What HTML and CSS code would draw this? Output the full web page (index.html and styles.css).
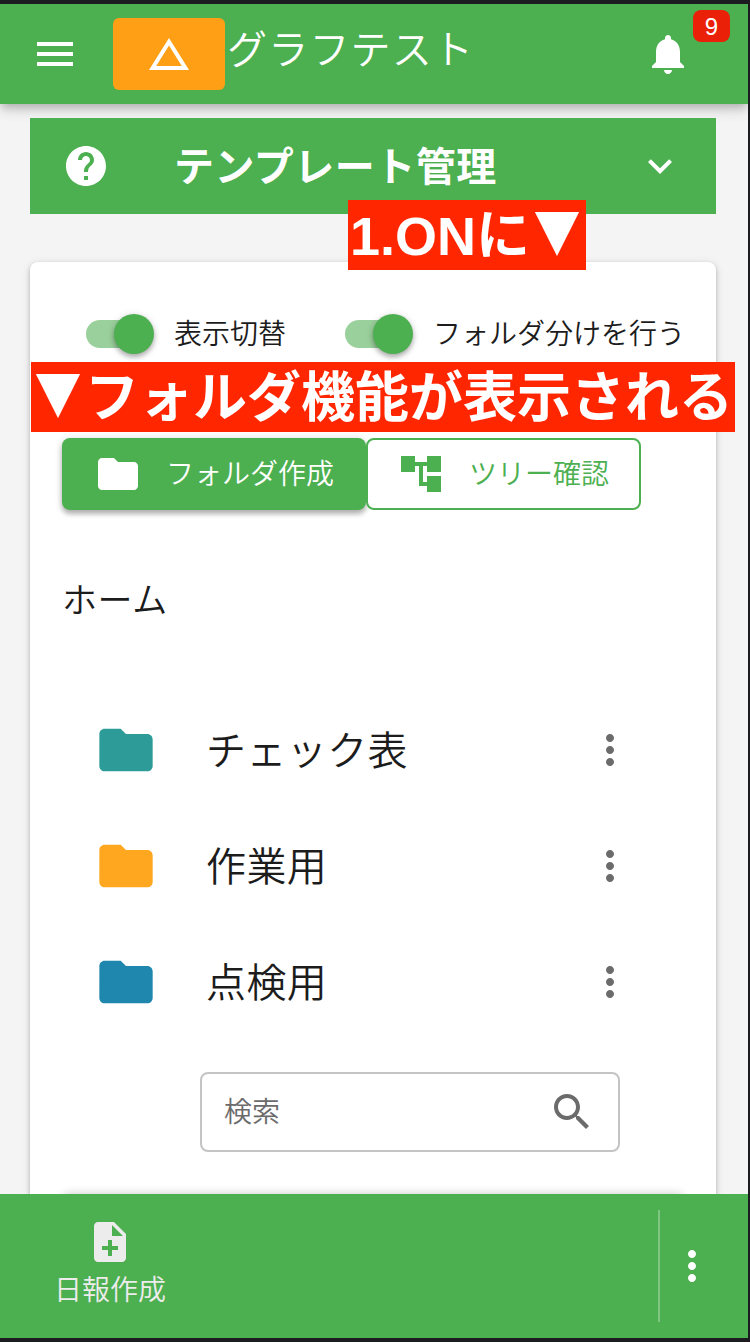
FILE: index.html
```html
<!DOCTYPE html>
<html lang="ja">

<head>
  <meta charset="UTF-8">
  <meta name="viewport" content="width=device-width, initial-scale=1.0">
  <title>テンプレート管理</title>
  <link rel="stylesheet" href="styles.css">
</head>

<body>

  <div class="screen">
    <header class="app-bar">
      <svg class="icon menu" viewBox="0 0 24 24"><path d="M3 18h18v-2H3v2zm0-5h18v-2H3v2zm0-7v2h18V6H3z" /></svg>
      <div class="logo">
        <svg class="icon" viewBox="0 0 24 24"><path d="M12 7.77L18.39 18H5.61L12 7.77M12 4L2 20h20L12 4z" /></svg>
      </div>
      <span class="app-title">グラフテスト</span>
      <div class="bell">
        <svg class="icon" viewBox="0 0 24 24"><path d="M12 22c1.1 0 2-.9 2-2h-4c0 1.1.89 2 2 2zm6-6v-5c0-3.07-1.64-5.64-4.5-6.32V4c0-.83-.67-1.5-1.5-1.5s-1.5.67-1.5 1.5v.68C7.63 5.36 6 7.92 6 11v5l-2 2v1h16v-1l-2-2z" /></svg>
        <span class="badge">9</span>
      </div>
    </header>

    <main>
      <div class="page-title">
        <svg class="icon" viewBox="0 0 24 24"><path d="M12 2C6.48 2 2 6.48 2 12s4.48 10 10 10 10-4.48 10-10S17.52 2 12 2zm1 17h-2v-2h2v2zm2.07-7.75l-.9.92C13.45 12.9 13 13.5 13 15h-2v-.5c0-1.1.45-2.1 1.17-2.83l1.24-1.26c.37-.36.59-.86.59-1.41 0-1.1-.9-2-2-2s-2 .9-2 2H8c0-2.21 1.79-4 4-4s4 1.79 4 4c0 .88-.36 1.68-.93 2.25z" /></svg>
        <h1>テンプレート管理</h1>
        <svg class="icon" viewBox="0 0 24 24"><path d="M7.41 8.58L12 13.17l4.59-4.59L18 10l-6 6-6-6 1.41-1.42z" /></svg>
      </div>

      <section class="card">
        <div class="switches">
          <div class="switch">
            <span class="track"><span class="thumb"></span></span>
            <span class="label">表示切替</span>
          </div>
          <div class="switch">
            <span class="track"><span class="thumb"></span></span>
            <span class="label">フォルダ分けを行う</span>
          </div>
        </div>

        <div class="actions">
          <button class="btn create">
            <svg class="icon" viewBox="0 0 24 24"><path d="M10 4H4c-1.1 0-1.99.9-1.99 2L2 18c0 1.1.9 2 2 2h16c1.1 0 2-.9 2-2V8c0-1.1-.9-2-2-2h-8l-2-2z" /></svg>
            <span class="label">フォルダ作成</span>
          </button>
          <button class="btn tree">
            <svg class="icon" viewBox="0 0 24 24"><path d="M22 11V3h-7v3H9V3H2v8h7V8h2v10h4v3h7v-8h-7v3h-2V8h2v3z" /></svg>
            <span class="label">ツリー確認</span>
          </button>
        </div>

        <div class="breadcrumb">ホーム</div>

        <ul class="folders">
          <li>
            <svg class="folder teal" viewBox="0 0 24 24"><path d="M10 4H4c-1.1 0-1.99.9-1.99 2L2 18c0 1.1.9 2 2 2h16c1.1 0 2-.9 2-2V8c0-1.1-.9-2-2-2h-8l-2-2z" /></svg>
            <span class="name">チェック表</span>
            <svg class="icon more" viewBox="0 0 24 24"><path d="M12 8c1.1 0 2-.9 2-2s-.9-2-2-2-2 .9-2 2 .9 2 2 2zm0 2c-1.1 0-2 .9-2 2s.9 2 2 2 2-.9 2-2-.9-2-2-2zm0 6c-1.1 0-2 .9-2 2s.9 2 2 2 2-.9 2-2-.9-2-2-2z" /></svg>
          </li>
          <li>
            <svg class="folder orange" viewBox="0 0 24 24"><path d="M10 4H4c-1.1 0-1.99.9-1.99 2L2 18c0 1.1.9 2 2 2h16c1.1 0 2-.9 2-2V8c0-1.1-.9-2-2-2h-8l-2-2z" /></svg>
            <span class="name">作業用</span>
            <svg class="icon more" viewBox="0 0 24 24"><path d="M12 8c1.1 0 2-.9 2-2s-.9-2-2-2-2 .9-2 2 .9 2 2 2zm0 2c-1.1 0-2 .9-2 2s.9 2 2 2 2-.9 2-2-.9-2-2-2zm0 6c-1.1 0-2 .9-2 2s.9 2 2 2 2-.9 2-2-.9-2-2-2z" /></svg>
          </li>
          <li>
            <svg class="folder blue" viewBox="0 0 24 24"><path d="M10 4H4c-1.1 0-1.99.9-1.99 2L2 18c0 1.1.9 2 2 2h16c1.1 0 2-.9 2-2V8c0-1.1-.9-2-2-2h-8l-2-2z" /></svg>
            <span class="name">点検用</span>
            <svg class="icon more" viewBox="0 0 24 24"><path d="M12 8c1.1 0 2-.9 2-2s-.9-2-2-2-2 .9-2 2 .9 2 2 2zm0 2c-1.1 0-2 .9-2 2s.9 2 2 2 2-.9 2-2-.9-2-2-2zm0 6c-1.1 0-2 .9-2 2s.9 2 2 2 2-.9 2-2-.9-2-2-2z" /></svg>
          </li>
        </ul>

        <div class="search">
          <span class="label">検索</span>
          <svg class="icon" viewBox="0 0 24 24"><path d="M15.5 14h-.79l-.28-.27C15.41 12.59 16 11.11 16 9.5 16 5.91 13.09 3 9.5 3S3 5.91 3 9.5 5.91 16 9.5 16c1.61 0 3.09-.59 4.23-1.57l.27.28v.79l5 4.99L20.49 19l-4.99-5zm-6 0C7.01 14 5 11.99 5 9.5S7.01 5 9.5 5 14 7.01 14 9.5 11.99 14 9.5 14z" /></svg>
        </div>

        <div class="inner-card"></div>
      </section>
    </main>

    <footer class="bottom-bar">
      <div class="report">
        <svg class="icon" viewBox="0 0 24 24"><path d="M14 2H6c-1.1 0-1.99.9-1.99 2L4 20c0 1.1.89 2 1.99 2H18c1.1 0 2-.9 2-2V8l-6-6zm2 14h-3v3h-2v-3H8v-2h3v-3h2v3h3v2zm-3-7V3.5L18.5 9H13z" /></svg>
        <span>日報作成</span>
      </div>
      <div class="bottom-more">
        <svg class="icon" viewBox="0 0 24 24"><path d="M12 8c1.1 0 2-.9 2-2s-.9-2-2-2-2 .9-2 2 .9 2 2 2zm0 2c-1.1 0-2 .9-2 2s.9 2 2 2 2-.9 2-2-.9-2-2-2zm0 6c-1.1 0-2 .9-2 2s.9 2 2 2 2-.9 2-2-.9-2-2-2z" /></svg>
      </div>
    </footer>

    <!-- 説明用ラベル -->
    <div class="note note-switch">1.ONに<span class="arrow">▼</span></div>
    <div class="note note-folder"><span class="arrow">▼</span>フォルダ機能が表示される</div>
  </div>

</body>

</html>
```

FILE: styles.css
```css
* {
  box-sizing: border-box;
}

body {
  margin: 0;
  background-color: #1c1b1f;
  font-family: "Liberation Sans", "Noto Sans CJK JP", sans-serif;
  font-weight: 350;
  font-size: 28px;
  color: #1c1c1c;
}

.screen {
  position: relative;
  display: flex;
  flex-direction: column;
  width: 748px;
  height: 1334px;
  margin-top: 4px;
  background-color: #f4f4f4;
  overflow: hidden;
}

.icon {
  flex: none;
  display: block;
  width: 48px;
  height: 48px;
  fill: currentColor;
}

.label {
  padding-bottom: 4px;
}

/* ヘッダー */
.app-bar {
  position: relative;
  z-index: 1;
  flex: none;
  display: flex;
  align-items: center;
  height: 100px;
  padding: 0 56px 0 31px;
  background-color: #4caf50;
  color: white;
  box-shadow: 0 4px 8px -2px rgba(0, 0, 0, 0.2), 0 8px 10px rgba(0, 0, 0, 0.08), 0 2px 20px rgba(0, 0, 0, 0.08);
}

.logo {
  display: flex;
  align-items: center;
  justify-content: center;
  width: 112px;
  height: 72px;
  margin-left: 34px;
  border-radius: 6px;
  background-color: #fe9f16;
}

.app-title {
  flex: 1;
  margin-left: 2px;
  padding-bottom: 9px;
  font-size: 40px;
  letter-spacing: 1.2px;
  line-height: 48px;
}

.bell {
  position: relative;
}

.badge {
  position: absolute;
  top: -20px;
  left: 49px;
  width: 37px;
  height: 32px;
  border-radius: 8px;
  background-color: #ea2008;
  font-size: 24px;
  line-height: 33px;
  text-align: center;
}

main {
  flex: 1;
  min-height: 0;
  padding: 14px 32px 0 30px;
}

.page-title {
  position: relative;
  z-index: 2;
  display: flex;
  align-items: center;
  height: 96px;
  padding: 0 32px;
  background-color: #4caf50;
  color: white;
}

.page-title h1 {
  flex: 1;
  margin: 0 0 0 64px;
  padding-top: 2px;
  font-size: 40px;
  line-height: 56px;
  letter-spacing: 0.5px;
}

/* カード */
.card {
  height: 1000px;
  margin-top: 48px;
  padding: 48px 32px 0;
  border-radius: 8px;
  background-color: white;
  box-shadow: 0 2px 4px rgba(0, 0, 0, 0.2), 0 2px 10px rgba(0, 0, 0, 0.12);
}

.switches {
  display: flex;
  gap: 59px;
  height: 48px;
  padding-left: 24px;
}

.switch {
  display: flex;
  align-items: center;
  gap: 20px;
  white-space: nowrap;
}

.track {
  display: flex;
  align-items: center;
  justify-content: flex-end;
  width: 68px;
  height: 28px;
  border-radius: 14px;
  background: linear-gradient(to right, #9ad09c 48px, transparent 48px);
}

.thumb {
  width: 40px;
  height: 40px;
  border-radius: 50%;
  background-color: #4caf50;
  box-shadow: 0 3px 5px rgba(0, 0, 0, 0.28), 0 1px 8px rgba(0, 0, 0, 0.12);
}

.actions {
  display: flex;
  margin-top: 80px;
}

.btn {
  display: flex;
  align-items: center;
  gap: 24px;
  height: 72px;
  padding: 0 32px;
  border: none;
  border-radius: 8px;
  font: inherit;
  white-space: nowrap;
}

.create {
  width: 304px;
  background-color: #4caf50;
  color: white;
  box-shadow: 0 4px 5px rgba(0, 0, 0, 0.25), 0 1px 9px rgba(0, 0, 0, 0.14);
}

.tree {
  width: 275px;
  padding: 0 29px;
  border: 2px solid #4caf50;
  background-color: white;
  color: #4caf50;
}

.breadcrumb {
  margin-top: 63px;
  font-size: 35px;
  line-height: 56px;
  letter-spacing: 0.6px;
}

.folders {
  margin: 63px 0 0;
  padding: 0 20px 0 32px;
  list-style: none;
}

.folders li {
  display: flex;
  align-items: center;
  height: 116px;
}

.folder {
  width: 64px;
  height: 64px;
}

.teal {
  fill: #2d9c99;
}

.orange {
  fill: #fea71f;
}

.blue {
  fill: #1f86ad;
}

.name {
  width: 380px;
  margin-left: 48px;
  padding-top: 2px;
  font-size: 40px;
  line-height: 56px;
  letter-spacing: 0.4px;
}

.more {
  color: #6b6b6b;
}

.search {
  display: flex;
  align-items: center;
  justify-content: space-between;
  width: 420px;
  height: 80px;
  margin: 32px 0 0 138px;
  padding: 0 22px;
  border: 2px solid #c4c4c4;
  border-radius: 8px;
  color: #6b6b6b;
}

.inner-card {
  height: 100px;
  margin-top: 42px;
  border-radius: 8px;
  box-shadow: 0 0 10px rgba(0, 0, 0, 0.22);
}

/* フッター */
.bottom-bar {
  position: relative;
  z-index: 1;
  flex: none;
  display: flex;
  align-items: center;
  justify-content: space-between;
  height: 144px;
  padding: 0 32px 0 54px;
  background-color: #4caf50;
  color: white;
}

.report {
  display: flex;
  flex-direction: column;
  align-items: center;
  gap: 5px;
  padding-bottom: 3px;
  color: #ececec;
  line-height: 40px;
}

.bottom-more {
  display: flex;
  align-items: center;
  height: 112px;
  padding-left: 8px;
  border-left: 2px solid #80c683;
}

/* 説明用ラベル */
.note {
  position: absolute;
  z-index: 3;
  height: 70px;
  background-color: #ff2600;
  color: white;
  font-size: 54px;
  font-weight: bold;
  line-height: 72px;
  white-space: nowrap;
}

.note-switch {
  top: 196px;
  left: 348px;
  width: 238px;
  padding-left: 2px;
}

.note-folder {
  top: 358px;
  left: 31px;
  width: 704px;
}

.arrow {
  display: inline-block;
  font-family: "Noto Sans CJK JP", sans-serif;
  line-height: 1;
  transform: translateY(-2px) scaleX(0.87);
}
```
